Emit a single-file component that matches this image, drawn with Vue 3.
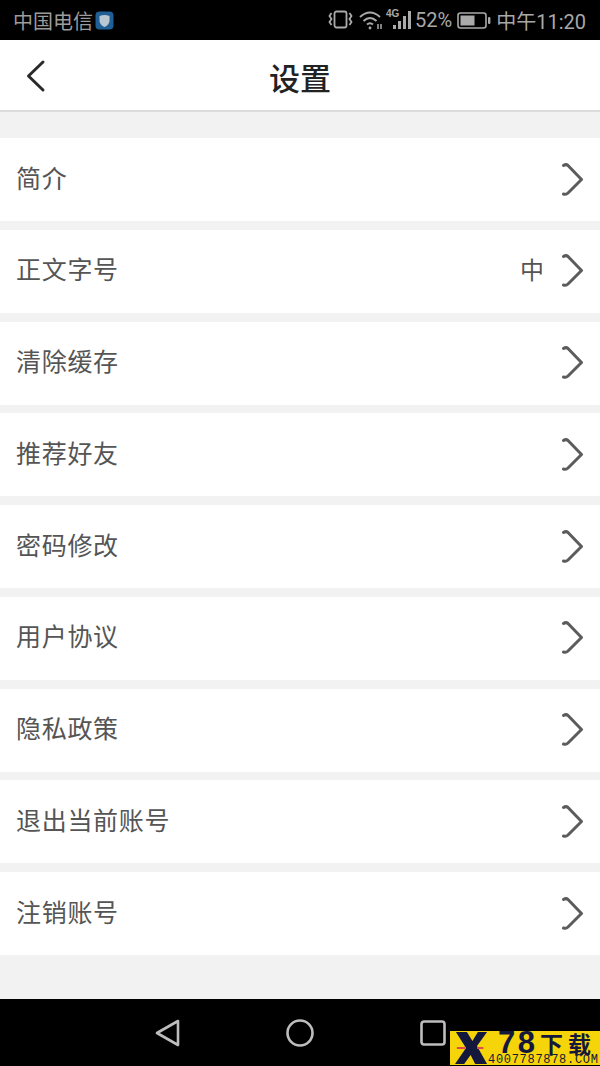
<script setup>
const rows = [
  { label: '简介' },
  { label: '正文字号', value: '中' },
  { label: '清除缓存' },
  { label: '推荐好友' },
  { label: '密码修改' },
  { label: '用户协议' },
  { label: '隐私政策' },
  { label: '退出当前账号' },
  { label: '注销账号' },
]
</script>

<template>
  <div class="phone">
    <header class="status">
      <div class="carrier">
        <span>中国电信</span>
        <svg class="shield" width="19" height="19" viewBox="0 0 19 19">
          <rect x="0.5" y="0.5" width="18" height="18" rx="4" fill="#1f5f96" />
          <path d="M4.5 5 Q9.5 3 14.5 5 V10 Q14 14 9.5 16 Q5 14 4.5 10 Z" fill="#b9c7d2" />
        </svg>
      </div>
      <div class="indicators">
        <svg width="26" height="22" viewBox="0 0 26 22" fill="none" stroke="#aaa" stroke-width="1.8">
          <rect x="6.500" y="2.500" width="12" height="16" rx="2" />
          <path d="M3.500 4 L1.500 7 L3.500 10 L1.500 13 L3.500 16" />
          <path d="M21.500 4 L23.500 7 L21.500 10 L23.500 13 L21.500 16" />
        </svg>
        <svg class="wifi" width="24" height="22" viewBox="0 0 24 22" fill="none" stroke="#aaa" stroke-width="2">
          <path d="M1 8 Q11 -1 21 8" />
          <path d="M4.5 12 Q11 6 17.5 12" />
          <path d="M8 15.5 Q11 13 14 15.5" />
          <circle cx="11" cy="19" r="1.4" fill="#aaa" stroke="none" />
          <path d="M19 15 V20 M22 15 V20" stroke-width="1.5" />
        </svg>
        <div class="signal">
          <span class="net">4G</span>
          <svg width="29" height="20" viewBox="0 0 29 20" fill="#aaa">
            <rect x="10" y="15" width="3" height="4" />
            <rect x="15" y="11" width="3" height="8" />
            <rect x="20" y="6" width="3" height="13" />
            <rect x="25" y="1" width="3" height="18" />
          </svg>
        </div>
        <span class="pct">52%</span>
        <svg class="battery" width="34" height="17" viewBox="0 0 34 17">
          <rect x="1" y="1" width="28" height="15" rx="2.5" fill="none" stroke="#aaa" stroke-width="1.6" />
          <rect x="3.5" y="3.5" width="14" height="10" fill="#aaa" />
          <rect x="31" y="5" width="2.4" height="7" rx="1" fill="#aaa" />
        </svg>
        <span class="time">中午11:20</span>
      </div>
    </header>

    <nav class="topbar">
      <svg class="back" width="22" height="34" viewBox="0 0 22 34" fill="none" stroke="#2a2a2a" stroke-width="3" stroke-linecap="round" stroke-linejoin="round">
        <path d="M18 3 L3.500 17 L18 31" />
      </svg>
      <h1>设置</h1>
    </nav>

    <main class="list">
      <div v-for="row in rows" :key="row.label" class="row">
        <span class="label">{{ row.label }}</span>
        <span v-if="row.value" class="value">{{ row.value }}</span>
        <svg class="chev" width="24" height="36" viewBox="0 0 24 36" fill="none" stroke="#5c5c5c" stroke-width="3" stroke-linecap="round" stroke-linejoin="round">
          <path d="M3.500 3.500 Q6 1.800 8 3.500 L21.500 17.500 L8 31 Q6 33 3.500 32" />
        </svg>
      </div>
    </main>

    <footer class="navbar">
      <svg class="nav-back" width="26" height="28" viewBox="0 0 26 28" fill="none" stroke="#bdbdbd" stroke-width="2.600" stroke-linejoin="round">
        <path d="M23 2 V26 L2 14 Z" />
      </svg>
      <svg class="nav-home" width="28" height="28" viewBox="0 0 28 28" fill="none" stroke="#bdbdbd" stroke-width="2.600">
        <circle cx="14" cy="14" r="12.500" />
      </svg>
      <svg class="nav-recent" width="26" height="26" viewBox="0 0 26 26" fill="none" stroke="#bdbdbd" stroke-width="2.600">
        <rect x="1.500" y="1.500" width="23" height="23" rx="2.500" />
      </svg>
      <div class="brand">
        <svg class="brand-x" width="33" height="34" viewBox="0 0 36 34" preserveAspectRatio="none">
          <path d="M1 1 H13 L19 10 L25 1 H35 L24 15 L35 33 H22 L17 24 L10 33 H0 L12 17 Z" fill="#14183c" />
          <path d="M2 17 H11 M24 17 H31" stroke="#e04a4a" stroke-width="2" />
        </svg>
        <div class="brand-text">
          <div class="brand-name"><span class="digits">78</span><span class="cn">下载</span></div>
          <div class="brand-tel">4007787878.COM</div>
        </div>
      </div>
    </footer>
  </div>
</template>

<style>
html, body { margin: 0; background: #f2f2f2; }
</style>

<style scoped>
.phone {
  width: 600px;
  height: 1066px;
  display: flex;
  flex-direction: column;
  overflow: hidden;
  background: #f2f2f2;
  font-family: "Noto Sans CJK SC", "Liberation Sans", sans-serif;
}
.status {
  height: 40px;
  flex: none;
  background: #000;
  color: #a8a8a8;
  display: flex;
  align-items: center;
  justify-content: space-between;
  padding: 0 14px;
  font-size: 20px;
  box-sizing: border-box;
}
.carrier { display: flex; align-items: center; gap: 2px; color: #9c9c9c; margin-left: -1px; }
.carrier span { line-height: 40px; padding-top: 1px; }
.indicators { display: flex; align-items: center; }
.wifi { margin-left: 5px; }
.signal { position: relative; height: 22px; display: flex; align-items: center; }
.net {
  position: absolute;
  left: 3px;
  top: 0;
  font: bold 10px/10px "Liberation Sans", sans-serif;
  color: #aaa;
}
.pct { font: 20px/40px "Roboto", sans-serif; margin-left: 3px; }
.battery { margin-left: 5px; }
.time { font-size: 20px; margin-left: 5px; font-family: "Roboto", "Noto Sans CJK SC", sans-serif; }
.topbar {
  height: 72px;
  flex: none;
  background: #fff;
  border-bottom: 2px solid #dcdcdc;
  box-sizing: border-box;
  display: grid;
  grid-template-columns: 1fr auto 1fr;
  align-items: center;
}
.back { margin-left: 25px; }
h1 {
  margin: 0;
  font-size: 31px;
  font-weight: 500;
  color: #222;
  line-height: 70px;
  padding-top: 2px;
}
.list {
  flex: 1;
  padding-top: 26px;
  display: flex;
  flex-direction: column;
  gap: 8.750px;
}
.row {
  height: 83px;
  flex: none;
  background: #fff;
  display: flex;
  align-items: center;
  padding: 0 16px;
}
.label { font-size: 25px; color: #555; flex: 1; letter-spacing: 0.700px; padding-bottom: 6px; }
.value { font-size: 24px; color: #555; margin-right: 16px; padding-bottom: 6px; }
.chev { flex: none; }
.navbar {
  height: 67px;
  flex: none;
  background: #000;
  position: relative;
  display: flex;
  align-items: center;
  padding-left: 155px;
  box-sizing: border-box;
}
.nav-back { margin-right: 105px; }
.nav-home { margin-right: 106px; }
.brand {
  position: absolute;
  left: 450px;
  top: 32px;
  width: 150px;
  height: 34px;
  background: #f6d40a;
  display: flex;
}
.brand-x { flex: none; margin-left: 5px; }
.brand-text { width: 112px; color: #14183c; }
.brand-name {
  display: flex;
  align-items: center;
  height: 24px;
  padding-left: 10px;
}
.digits { font: bold 31px/24px "Liberation Sans", sans-serif; letter-spacing: 2.500px; width: 42px; flex: none; }
.cn { font-size: 23px; font-weight: 700; line-height: 24px; letter-spacing: 5px; white-space: nowrap; }
.brand-tel { font: 12px/10px "Liberation Mono", monospace; white-space: nowrap; letter-spacing: 0.700px; }
</style>
